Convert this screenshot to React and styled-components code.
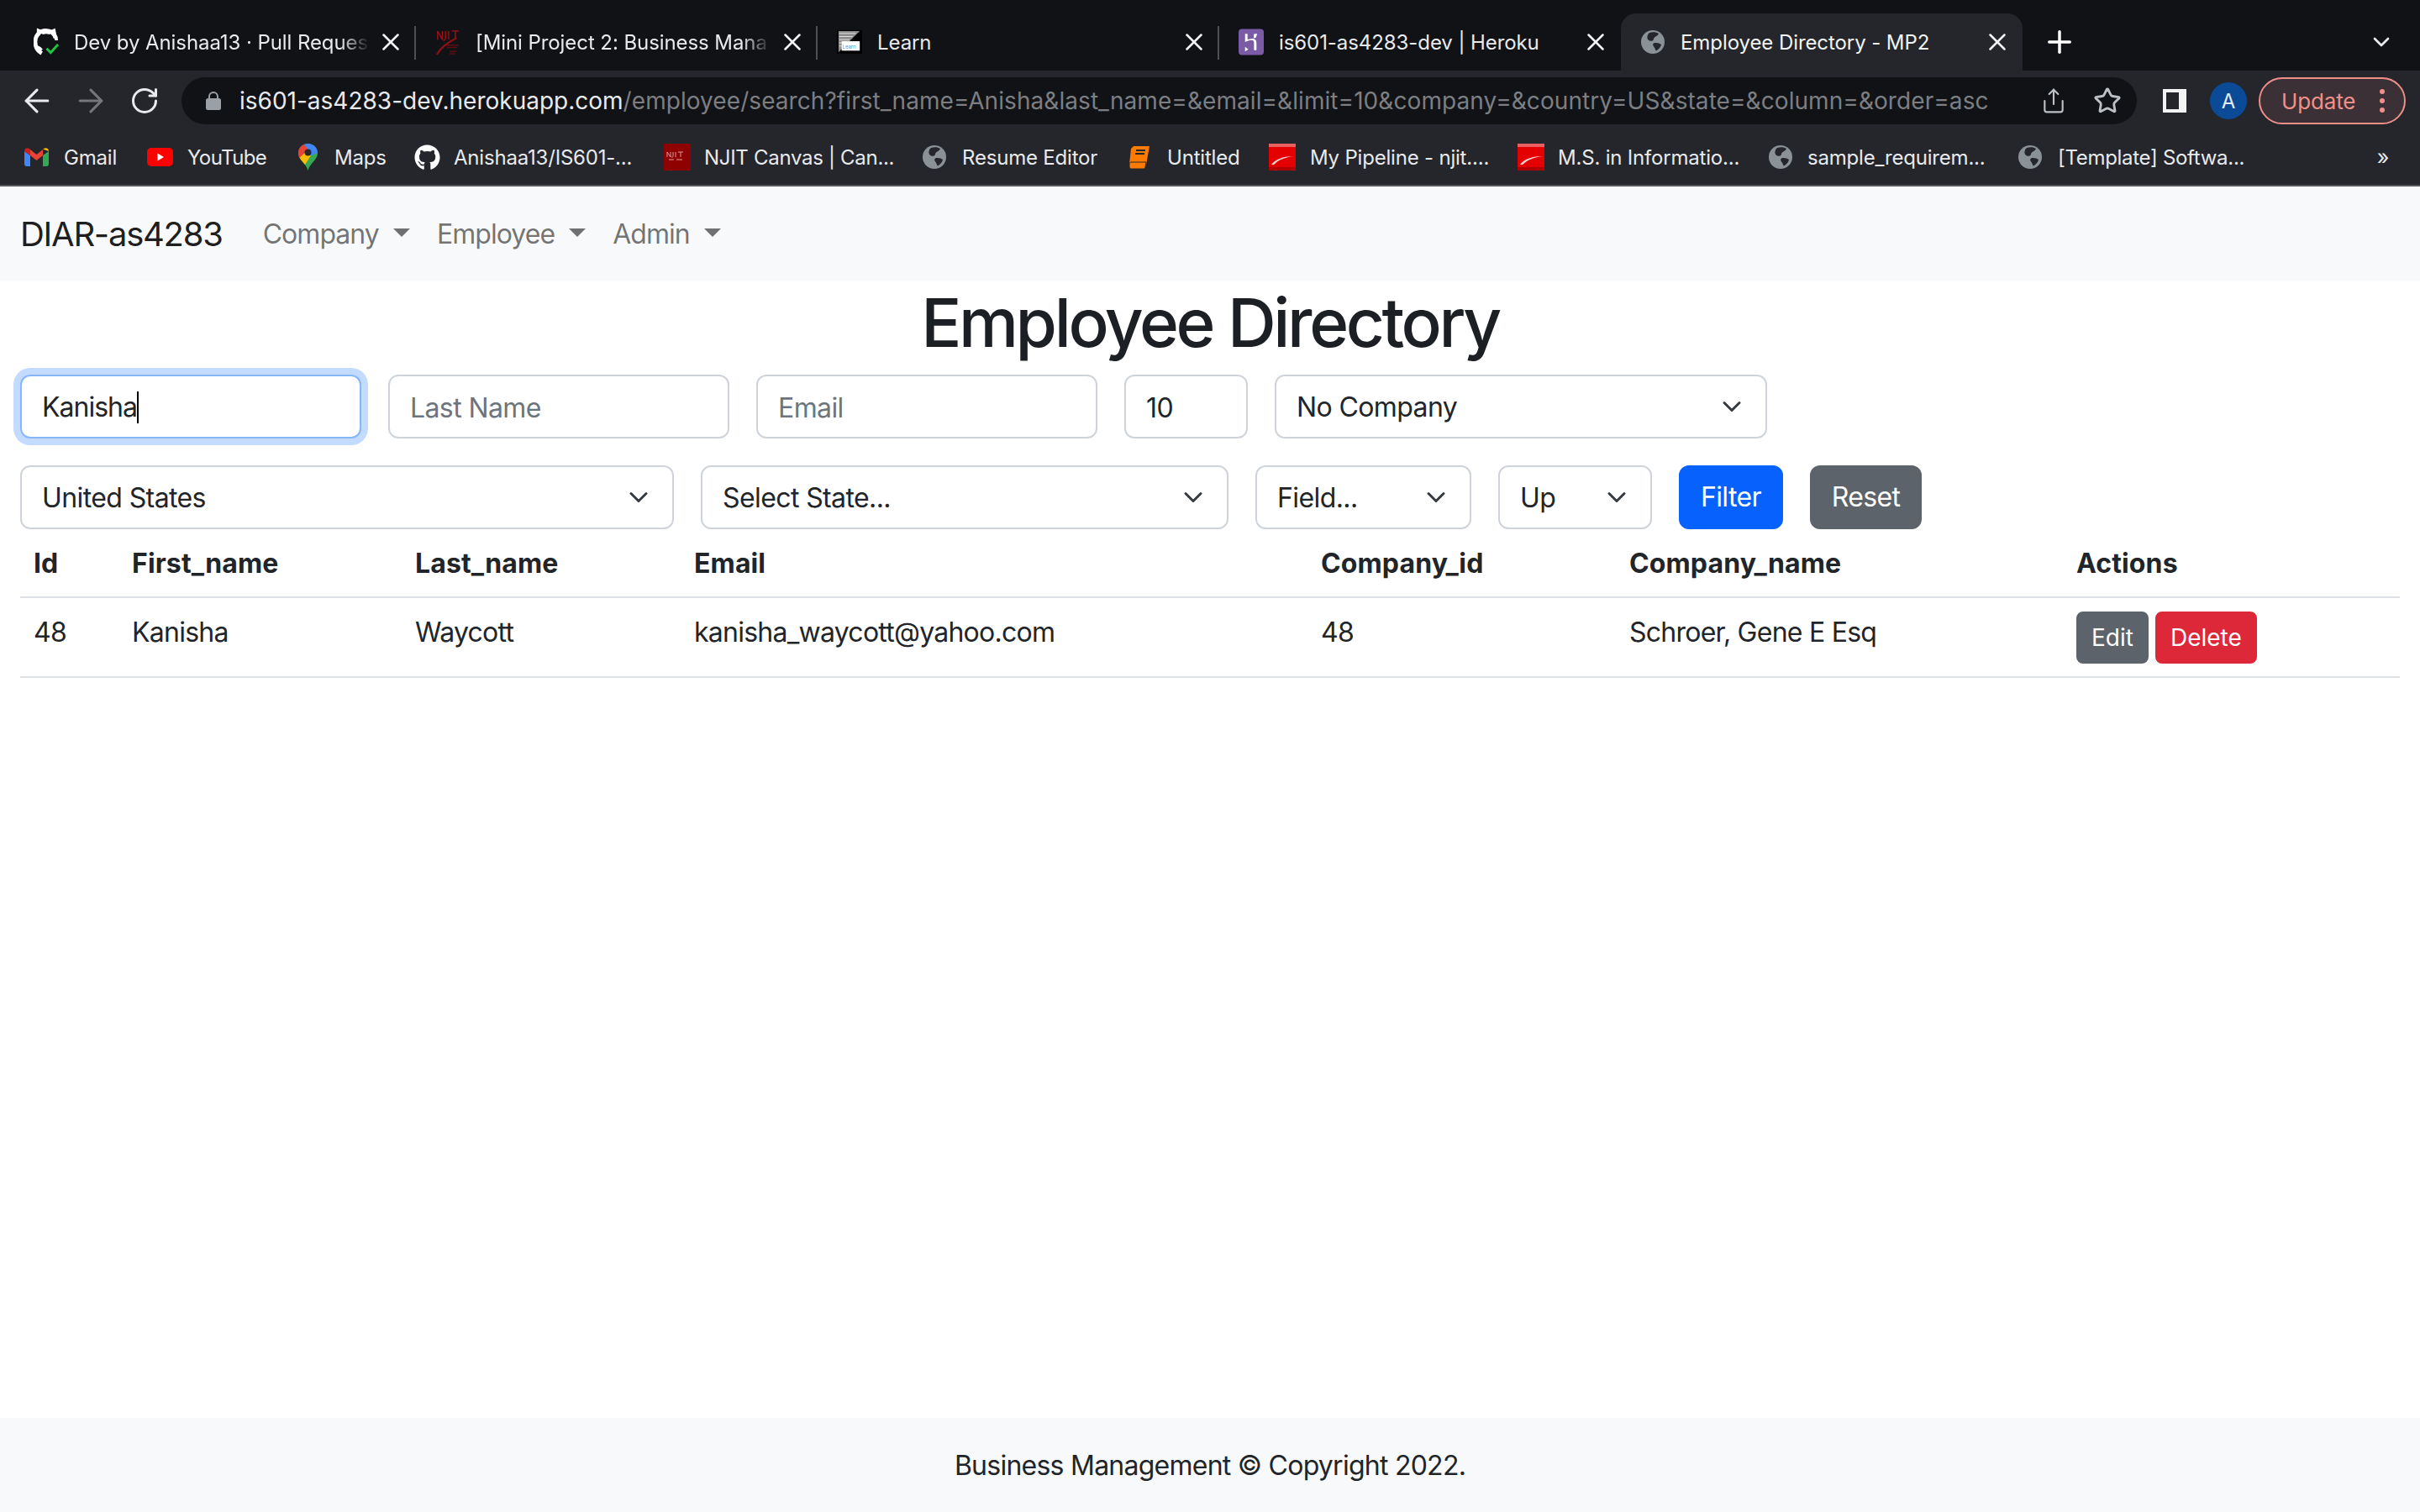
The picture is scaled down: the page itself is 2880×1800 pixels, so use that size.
import React from "react";
import styled, { createGlobalStyle } from "styled-components";
import { ArrowLeft, ArrowRight, RotateCw, Share, Star, X, Plus, ChevronDown } from "lucide-react";
import { FaGithub } from "react-icons/fa";

const Global = createGlobalStyle`
  html, body { margin: 0; padding: 0; background: #fff; }
  body { font-family: Inter, "Liberation Sans", sans-serif; color: #212529; }
  * { box-sizing: border-box; }
`;

const Page = styled.div`
  display: flex;
  flex-direction: column;
  height: 1800px;
  overflow: hidden;
`;

/* ---------- browser chrome ---------- */
const TabStrip = styled.div`
  display: flex;
  height: 84px;
  padding: 16px 30px 0 17px;
  background: #101216;
  align-items: stretch;
`;
const Tab = styled.div`
  position: relative;
  display: flex;
  align-items: center;
  width: 478px;
  height: 68px;
  padding: 0 13px 0 23px;
  gap: 18px;
  color: ${(p) => (p.$active ? "#f1f3f4" : "#e8eaed")};
  background: ${(p) => (p.$active ? "#24262b" : "transparent")};
  border-radius: 18px 18px 0 0;
  font-size: 24px;
  letter-spacing: -0.08px;
  ${(p) =>
    p.$sep
      ? `&::after { content: ""; position: absolute; right: 0; top: 15px; height: 40px; width: 2px; background: #4d4f53; }`
      : ""}
`;
const TabIcon = styled.span`
  display: flex;
  flex: none;
  width: 30px;
  height: 34px;
  align-items: center;
  justify-content: center;
`;
const TabTitle = styled.span`
  flex: 1;
  min-width: 0;
  overflow: hidden;
  white-space: nowrap;
  ${(p) =>
    p.$fade
      ? `-webkit-mask-image: linear-gradient(to right, #000 90%, transparent 100%); mask-image: linear-gradient(to right, #000 90%, transparent 100%);`
      : ""}
`;
const TabClose = styled.span`
  display: flex;
  flex: none;
  margin-left: -10px;
  color: #f1f3f4;
`;
const NewTab = styled.span`
  display: flex;
  align-items: center;
  margin-left: 23px;
  color: #fff;
`;
const TabMenu = styled.span`
  display: flex;
  align-items: center;
  margin-left: auto;
  color: #e8eaed;
`;
const Toolbar = styled.div`
  display: flex;
  align-items: flex-start;
  height: 70px;
  padding: 8px 17px 0 12px;
  background: #24262b;
`;
const NavButton = styled.span`
  display: flex;
  flex: none;
  width: 64px;
  height: 56px;
  align-items: center;
  justify-content: center;
  color: ${(p) => (p.$off ? "#74767a" : "#e8eaed")};
`;
const AddressBar = styled.div`
  display: flex;
  align-items: center;
  width: 2327px;
  height: 56px;
  margin: 0 13px 0 12px;
  padding: 0 3px 0 29px;
  background: #101216;
  border-radius: 28px;
  font-size: 28px;
`;
const Url = styled.span`
  flex: 1;
  margin-left: 22px;
  white-space: nowrap;
  overflow: hidden;
  color: #7c7e82;
  letter-spacing: 0.07px;
`;
const UrlHost = styled.span`
  color: #e8eaed;
  letter-spacing: 0;
`;
const Avatar = styled.span`
  display: flex;
  width: 44px;
  height: 44px;
  align-items: center;
  justify-content: center;
  border-radius: 50%;
  background: #0b4a96;
  color: #e8eaed;
  font-size: 24px;
`;
const UpdatePill = styled.div`
  display: flex;
  align-items: center;
  justify-content: space-between;
  width: 175px;
  height: 56px;
  margin-left: 4px;
  padding: 0 23px 0 25px;
  border: 2px solid #ee8f88;
  border-radius: 28px;
  background: #3a3035;
  color: #f0908a;
  font-size: 26px;
  letter-spacing: -0.15px;
`;
const MenuDots = styled.span`
  display: flex;
  flex-direction: column;
  gap: 5px;
`;
const Dot = styled.i`
  display: block;
  width: 6px;
  height: 6px;
  border-radius: 50%;
  background: #f0908a;
`;
const BookmarkBar = styled.div`
  display: flex;
  align-items: center;
  height: 68px;
  padding: 0 37px 0 29px;
  background: #24262b;
  border-bottom: 2px solid #55565b;
  color: #e8eaed;
  font-size: 24px;
  letter-spacing: -0.2px;
`;
const Bookmark = styled.div`
  display: flex;
  flex: none;
  align-items: center;
  gap: ${(p) => p.$gap || 18}px;
  width: ${(p) => p.$w}px;
  white-space: nowrap;
  letter-spacing: ${(p) => p.$track ?? -0.2}px;
`;
const Overflow = styled.span`
  margin-left: auto;
  font-size: 25px;
`;

/* ---------- page ---------- */
const Navbar = styled.nav`
  display: flex;
  flex: none;
  align-items: center;
  height: 112px;
  padding: 0 24px;
  background: #f8f9fa;
`;
const Brand = styled.span`
  margin-right: 32px;
  font-size: 40px;
  letter-spacing: -1.27px;
  color: rgba(0, 0, 0, 0.9);
`;
const NavLink = styled.span`
  display: flex;
  align-items: center;
  padding: 0 16px;
  font-size: 32px;
  letter-spacing: -0.95px;
  color: rgba(0, 0, 0, 0.55);
  &::after {
    content: "";
    margin-top: -2px;
    margin-left: 17px;
    border-top: 10px solid rgba(0, 0, 0, 0.55);
    border-left: 10px solid transparent;
    border-right: 10px solid transparent;
  }
`;
const Main = styled.main`
  flex: 1;
`;
const Title = styled.h1`
  margin: 0 0 14px;
  padding-top: 2px;
  font-size: 80px;
  line-height: 96px;
  font-weight: 500;
  letter-spacing: -3.4px;
  text-align: center;
  color: #1c1f23;
`;
const FilterRow = styled.div`
  display: flex;
  gap: 32px;
  margin: 0 24px 32px;
  &:last-of-type { margin-bottom: 0; }
`;
const fieldCss = `
  display: block;
  height: 76px;
  border: 2px solid #ced4da;
  border-radius: 12px;
  background-color: #fff;
  font: 400 32px/48px Inter, "Liberation Sans", sans-serif;
  letter-spacing: -0.6px;
  color: #212529;
  outline: none;
`;
const TextField = styled.input`
  ${fieldCss}
  width: ${(p) => p.$w}px;
  padding: 13px 24px 11px;
  &::placeholder { color: #6c757d; opacity: 1; }
`;
const FocusedField = styled.div`
  ${fieldCss}
  display: flex;
  align-items: center;
  width: ${(p) => p.$w}px;
  padding: 13px 24px 11px;
  letter-spacing: -1px;
  border-color: #86b7fe;
  box-shadow: 0 0 0 8px rgba(13, 110, 253, 0.25);
`;
const Caret = styled.i`
  display: block;
  width: 2px;
  height: 38px;
  background: #000;
`;
const SelectField = styled.select`
  ${fieldCss}
  appearance: none;
  width: ${(p) => p.$w}px;
  padding: 13px 72px 11px 24px;
  background-image: url("data:image/svg+xml,%3csvg xmlns='http://www.w3.org/2000/svg' viewBox='0 0 16 16'%3e%3cpath fill='none' stroke='%23343a40' stroke-linecap='round' stroke-linejoin='round' stroke-width='2' d='m2 5 6 6 6-6'/%3e%3c/svg%3e");
  background-repeat: no-repeat;
  background-position: right 24px center;
  background-size: 32px 24px;
`;
const Button = styled.button`
  height: ${(p) => (p.$small ? 62 : 76)}px;
  padding: ${(p) => (p.$small ? "8px 16px" : "12px 24px")};
  border: 2px solid ${(p) => p.$bg};
  border-radius: ${(p) => (p.$small ? 8 : 12)}px;
  background: ${(p) => p.$bg};
  color: #fff;
  font: 400 ${(p) => (p.$small ? 28 : 32)}px/1.5 Inter, "Liberation Sans", sans-serif;
  letter-spacing: ${(p) => (p.$small ? 0 : -0.65)}px;
`;
const Table = styled.table`
  width: 2832px;
  margin: 0 24px;
  border-collapse: collapse;
  table-layout: fixed;
  font-size: 32px;
  line-height: 48px;
  color: #212529;
`;
const HeadCell = styled.th`
  width: ${(p) => p.$w}px;
  padding: 17px 16px 15px;
  text-align: left;
  font-weight: 700;
  letter-spacing: 0.12px;
  border-bottom: 2px solid #dee2e6;
`;
const Cell = styled.td`
  padding: 17px 16px 15px;
  vertical-align: top;
  letter-spacing: -0.75px;
  border-bottom: 2px solid #dee2e6;
`;
const Actions = styled.div`
  display: flex;
  gap: 8px;
  margin-top: -1px;
`;
const Footer = styled.footer`
  display: flex;
  flex: none;
  height: 112px;
  align-items: center;
  justify-content: center;
  background: #f8f9fa;
  font-size: 32px;
  letter-spacing: -0.75px;
`;

/* ---------- drawn favicons ---------- */
const Globe = ({ size = 28, bg = "#24262b" }) => (
  <svg width={size} height={size} viewBox="0 0 28 28">
    <circle cx="14" cy="14" r="14" fill="#8a9197" />
    <path d="M10 3c4-1.500 8-1 11 1-1 2.500-3.500 3-5 4.500-1.500 1.500-.5 3-2.500 4-2.500 1-5.500-.5-6-3C7 7 8 4.500 10 3z" fill={bg} />
    <path d="M15 15.500c3-1 7 0 9 1.500-.5 3-3 6-6 7.500-1.500-1-1-3-2.500-4.500-1.500-1.500-2-3.500-.5-4.500z" fill={bg} />
  </svg>
);
const PullIcon = () => (
  <svg width="31" height="34" viewBox="0 0 31 34">
    <path d="M6 9 6 3l6 2.500c2-.6 5-.6 7 0L25 3l1 5c1.500 2 2 4 2 7" fill="none" stroke="#fff" strokeWidth="4" />
    <path d="M27 12C25 6 21 3 15 3 7 3 2 9 2 17c0 6 3 11 8 14" fill="none" stroke="#fff" strokeWidth="5" />
    <path d="M3 22c3 1 5 2 7 5" fill="none" stroke="#fff" strokeWidth="3" />
    <path d="M16 25l5 5 9-10" fill="none" stroke="#101216" strokeWidth="7" />
    <path d="M16 25l5 5 9-10" fill="none" stroke="#1fc63f" strokeWidth="3" />
  </svg>
);
const NjitTabIcon = () => (
  <svg width="32" height="34" viewBox="0 0 32 34">
    <path d="M3 3v11M3 3l6 11V3M13 3v8c0 3-1 4-3 4M17 3v11M21 3h9M25.500 3v11" fill="none" stroke="#a01015" strokeWidth="1.500" />
    <path d="M2 33C7 24 15 18 27 12" fill="none" stroke="#8a0f13" strokeWidth="2.500" />
    <path d="M15 21h15M15 24h13M18 29h9M18 32h7" stroke="#5d0d10" strokeWidth="1.500" />
  </svg>
);
const LearnIcon = () => (
  <svg width="32" height="34" viewBox="0 0 32 34">
    <rect y="2" width="32" height="30" fill="#000" />
    <path d="M2 3h27L2 30z" fill="#8f8f8f" />
    <path d="M3 6h21M3 10h17M3 14h13M3 18h9M3 22h5" stroke="#dcdcdc" strokeWidth="1.200" />
    <rect x="6" y="16" width="23" height="12" fill="#fff" />
    <text x="7" y="25" fontFamily="Inter, sans-serif" fontSize="6.500" fill="#3aa3e8">Learn</text>
  </svg>
);
const HerokuIcon = () => (
  <svg width="31" height="32" viewBox="0 0 31 32">
    <rect width="31" height="32" rx="4" fill="#7b5ba6" />
    <path d="M8 6v10c3-1.500 7-3 9-2 2 .5 2 2 2 4v8h3V17c0-2-.5-4-3-5-2.500-.7-5 .3-8 1V6zM8 22l4 3-4 2.500z" fill="#fff" />
    <path d="M19 6h4l-2 5h-2.500z" fill="#fff" />
  </svg>
);
const LockIcon = () => (
  <svg width="18" height="22" viewBox="0 0 18 22">
    <path d="M4 9V6a5 5 0 0 1 10 0v3" fill="none" stroke="#9aa0a6" strokeWidth="2" />
    <rect y="8" width="18" height="14" rx="2.500" fill="#9aa0a6" />
  </svg>
);
const SidePanelIcon = () => (
  <svg width="28" height="28" viewBox="0 0 28 28">
    <rect width="28" height="28" fill="#f1f3f4" />
    <rect x="4" y="4" width="15" height="20" fill="#24262b" />
  </svg>
);
const GmailIcon = () => (
  <svg width="29" height="22" viewBox="0 0 29 22">
    <path d="M0 4v15a3 3 0 0 0 3 3h4V9z" fill="#4285f4" />
    <path d="M29 4v15a3 3 0 0 1-3 3h-4V9z" fill="#34a853" />
    <path d="M22 1.500 29 4c0-3-3-5-6-3l-1 1z" fill="#fbbc04" />
    <path d="M7 9 14.500 15 22 9V2l-7.500 6L7 2z" fill="#ea4335" />
    <path d="M0 4c0-3 3-5 6-3l1 1v7L0 4z" fill="#c5221f" />
  </svg>
);
const YouTubeIcon = () => (
  <svg width="31" height="22" viewBox="0 0 31 22">
    <rect width="31" height="22" rx="5" fill="#f00" />
    <path d="M12.500 6.500v9l7.500-4.500z" fill="#fff" />
  </svg>
);
const MapsIcon = () => (
  <svg width="23" height="32" viewBox="0 0 23 32">
    <clipPath id="pin">
      <path d="M11.500 0C5 0 0 5 0 11.500 0 19 9 23 11.500 32 14 23 23 19 23 11.500 23 5 18 0 11.500 0z" />
    </clipPath>
    <g clipPath="url(#pin)">
      <rect width="23" height="32" fill="#34a853" />
      <path d="M0 17 11.500 7 15 14 8 25H0z" fill="#fbbc04" />
      <path d="M0 0h7l6 6L0 18z" fill="#ea4335" />
      <path d="M6 0h17v11l-8 3-4-8z" fill="#4285f4" />
    </g>
    <circle cx="11.500" cy="10.500" r="4" fill="#2a2a2a" />
  </svg>
);
const NjitBookmark = () => (
  <svg width="32" height="32" viewBox="0 0 32 32">
    <rect width="32" height="32" fill="#8f0000" />
    <path d="M4 10v6M4 10l4 6v-6M11 10v5c0 1-1 1-2 1M14 10v6M17 10h6M20 10v6M6 19h6M15 19h7" fill="none" stroke="#d99a9a" strokeWidth="1" />
  </svg>
);
const BookIcon = () => (
  <svg width="26" height="28" viewBox="0 0 26 28">
    <path d="M6 1h19l-4 22H1L3 4z" fill="#ff7a00" />
    <path d="M1 23c0-2 1-3 3-3h17l-1 6c-.2 1-1 2-2 2H3c-1.500 0-2-1.500-2-3z" fill="#ff7a00" stroke="#24262b" strokeWidth="1" />
    <path d="M9 6h11M8 10h11" stroke="#24262b" strokeWidth="2" />
  </svg>
);
const RedIcon = () => (
  <svg width="32" height="32" viewBox="0 0 32 32">
    <rect width="32" height="32" fill="#e40000" />
    <rect width="32" height="4" fill="#e86060" />
    <rect y="28" width="32" height="4" fill="#b00000" />
    <path d="M3 25C8 18 18 15 30 15c-10 1-18 4-24 10z" fill="#f4d6d6" />
  </svg>
);

const Chevron = styled(ChevronDown)`
  display: block;
`;

const closeIcon = <X size={34} strokeWidth={1.8} />;

export default function App() {
  return (
    <Page>
      <Global />
      <TabStrip>
        <Tab $sep>
          <TabIcon><PullIcon /></TabIcon>
          <TabTitle $fade>Dev by Anishaa13 · Pull Reques</TabTitle>
          <TabClose>{closeIcon}</TabClose>
        </Tab>
        <Tab $sep>
          <TabIcon><NjitTabIcon /></TabIcon>
          <TabTitle $fade>[Mini Project 2: Business Mana</TabTitle>
          <TabClose>{closeIcon}</TabClose>
        </Tab>
        <Tab $sep>
          <TabIcon><LearnIcon /></TabIcon>
          <TabTitle>Learn</TabTitle>
          <TabClose>{closeIcon}</TabClose>
        </Tab>
        <Tab>
          <TabIcon><HerokuIcon /></TabIcon>
          <TabTitle>is601-as4283-dev | Heroku</TabTitle>
          <TabClose>{closeIcon}</TabClose>
        </Tab>
        <Tab $active>
          <TabIcon><Globe /></TabIcon>
          <TabTitle>Employee Directory - MP2</TabTitle>
          <TabClose>{closeIcon}</TabClose>
        </Tab>
        <NewTab><Plus size={42} strokeWidth={2} /></NewTab>
        <TabMenu><Chevron size={32} strokeWidth={2} /></TabMenu>
      </TabStrip>

      <Toolbar>
        <NavButton><ArrowLeft size={44} strokeWidth={1.7} /></NavButton>
        <NavButton $off><ArrowRight size={44} strokeWidth={1.7} /></NavButton>
        <NavButton><RotateCw size={36} strokeWidth={2} /></NavButton>
        <AddressBar>
          <LockIcon />
          <Url>
            <UrlHost>is601-as4283-dev.herokuapp.com</UrlHost>
            /employee/search?first_name=Anisha&amp;last_name=&amp;email=&amp;limit=10&amp;company=&amp;country=US&amp;state=&amp;column=&amp;order=asc
          </Url>
          <NavButton><Share size={32} strokeWidth={1.6} color="#bdc1c6" /></NavButton>
          <NavButton><Star size={34} strokeWidth={2} color="#bdc1c6" /></NavButton>
        </AddressBar>
        <NavButton><SidePanelIcon /></NavButton>
        <NavButton><Avatar>A</Avatar></NavButton>
        <UpdatePill>
          Update
          <MenuDots><Dot /><Dot /><Dot /></MenuDots>
        </UpdatePill>
      </Toolbar>

      <BookmarkBar>
        <Bookmark $w={146}><GmailIcon />Gmail</Bookmark>
        <Bookmark $w={180} $gap={17} $track={-0.6}><YouTubeIcon />YouTube</Bookmark>
        <Bookmark $w={138} $gap={20}><MapsIcon />Maps</Bookmark>
        <Bookmark $w={297} $gap={16}><FaGithub size={31} color="#fff" />Anishaa13/IS601-...</Bookmark>
        <Bookmark $w={308} $gap={16} $track={-0.3}><NjitBookmark />NJIT Canvas | Can...</Bookmark>
        <Bookmark $w={245} $gap={19}><Globe />Resume Editor</Bookmark>
        <Bookmark $w={167} $gap={20}><BookIcon />Untitled</Bookmark>
        <Bookmark $w={296} $gap={17}><RedIcon />My Pipeline - njit....</Bookmark>
        <Bookmark $w={299} $gap={16}><RedIcon />M.S. in Informatio...</Bookmark>
        <Bookmark $w={297} $gap={18}><Globe />sample_requirem...</Bookmark>
        <Bookmark $w={320} $gap={19} $track={-0.3}><Globe />[Template] Softwa...</Bookmark>
        <Overflow>»</Overflow>
      </BookmarkBar>

      <Navbar>
        <Brand>DIAR-as4283</Brand>
        <NavLink>Company</NavLink>
        <NavLink>Employee</NavLink>
        <NavLink>Admin</NavLink>
      </Navbar>

      <Main>
        <Title>Employee Directory</Title>
        <FilterRow>
          <FocusedField $w={406}>Kanisha<Caret /></FocusedField>
          <TextField $w={406} placeholder="Last Name" readOnly />
          <TextField $w={406} placeholder="Email" readOnly />
          <TextField $w={147} value="10" readOnly />
          <SelectField $w={586} defaultValue="No Company"><option>No Company</option></SelectField>
        </FilterRow>
        <FilterRow>
          <SelectField $w={778} defaultValue="United States"><option>United States</option></SelectField>
          <SelectField $w={628}><option>Select State...</option></SelectField>
          <SelectField $w={257}><option>Field...</option></SelectField>
          <SelectField $w={183}><option>Up</option></SelectField>
          <Button $bg="#0661fd">Filter</Button>
          <Button $bg="#5c636a">Reset</Button>
        </FilterRow>
        <Table>
          <thead>
            <tr>
              <HeadCell $w={117}>Id</HeadCell>
              <HeadCell $w={337}>First_name</HeadCell>
              <HeadCell $w={332}>Last_name</HeadCell>
              <HeadCell $w={746}>Email</HeadCell>
              <HeadCell $w={367}>Company_id</HeadCell>
              <HeadCell $w={532}>Company_name</HeadCell>
              <HeadCell $w={401}>Actions</HeadCell>
            </tr>
          </thead>
          <tbody>
            <tr>
              <Cell>48</Cell>
              <Cell>Kanisha</Cell>
              <Cell>Waycott</Cell>
              <Cell>kanisha_waycott@yahoo.com</Cell>
              <Cell>48</Cell>
              <Cell>Schroer, Gene E Esq</Cell>
              <Cell>
                <Actions>
                  <Button $small $bg="#5c636a">Edit</Button>
                  <Button $small $bg="#dc2839">Delete</Button>
                </Actions>
              </Cell>
            </tr>
          </tbody>
        </Table>
      </Main>

      <Footer>Business Management © Copyright 2022.</Footer>
    </Page>
  );
}
